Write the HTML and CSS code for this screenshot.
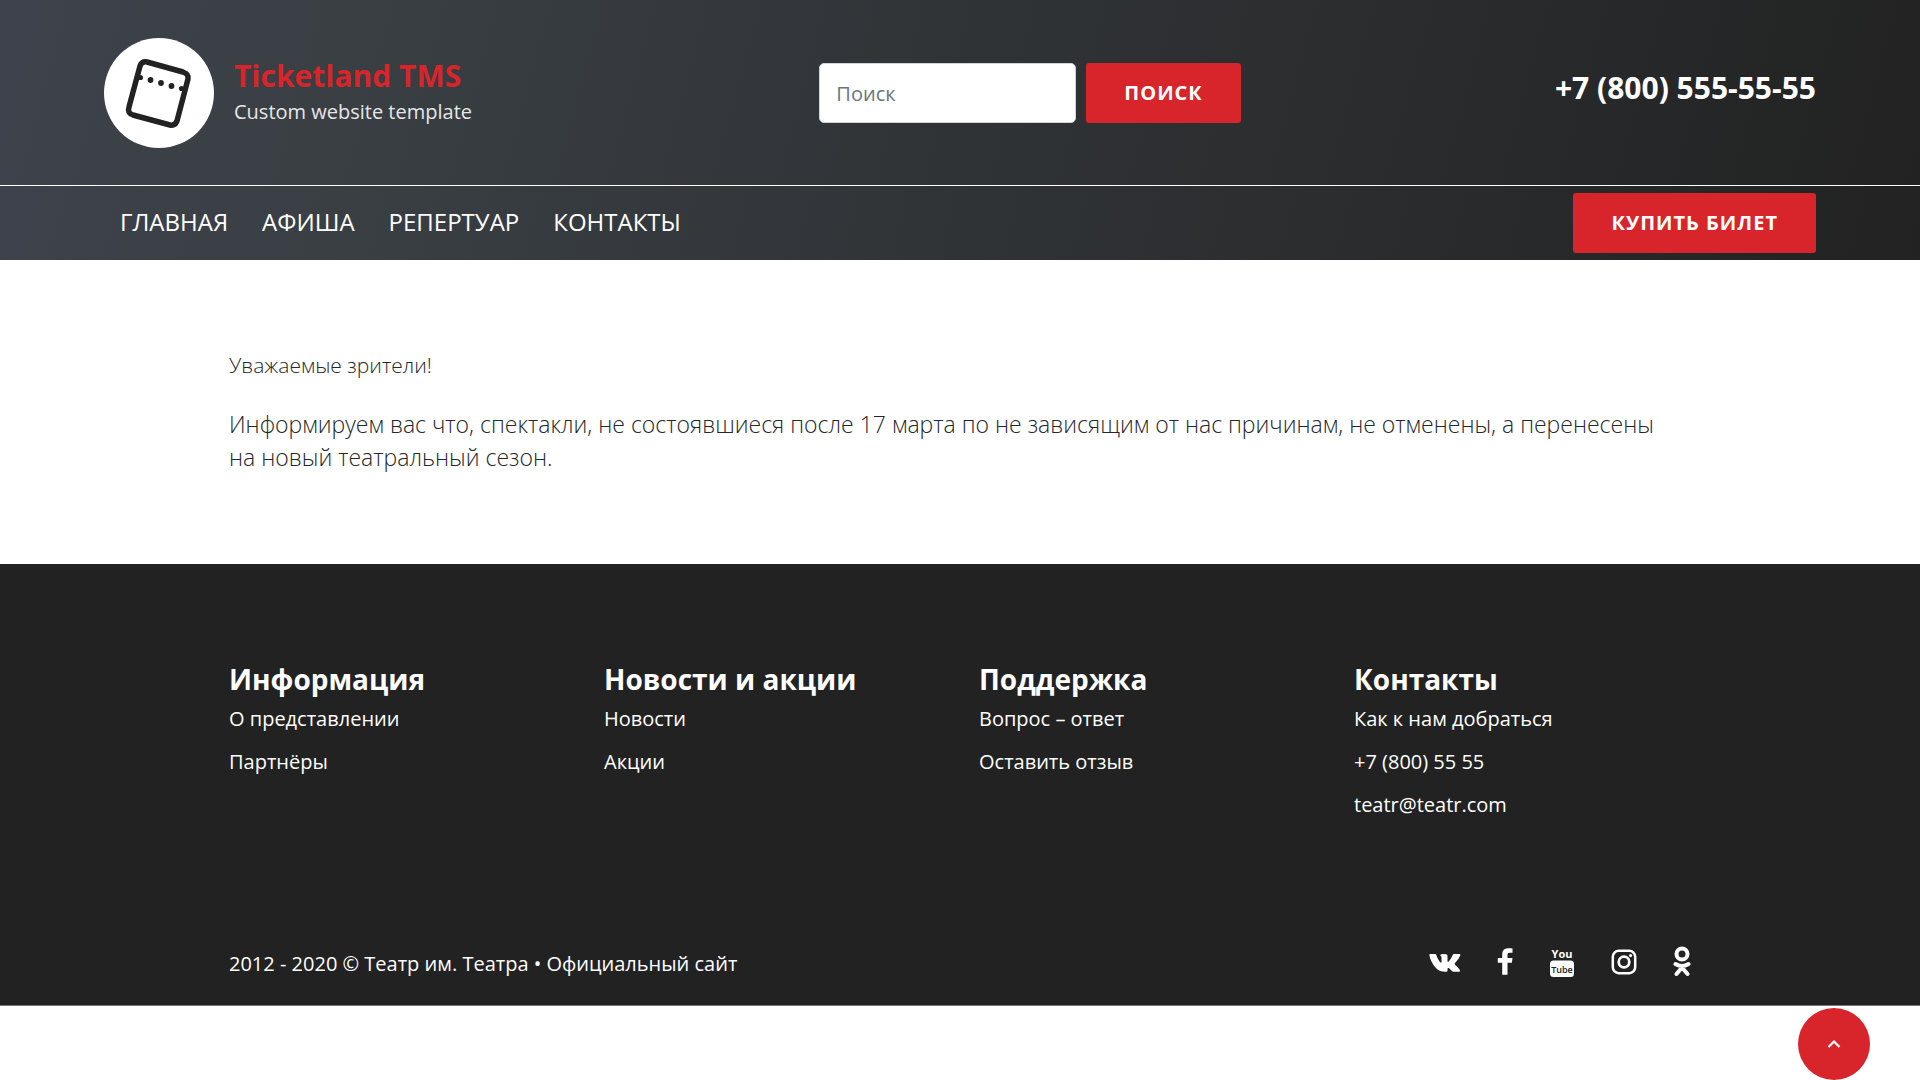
FILE: index.html
```html
<!DOCTYPE html>
<html lang="ru">
<head>
<meta charset="utf-8">
<meta name="viewport" content="width=device-width, initial-scale=1">
<title>Ticketland TMS</title>
<link rel="stylesheet" href="styles.css">
</head>
<body>
<header class="header">
  <div class="header-band">
    <div class="header-top">
      <a class="logo" href="#">
        <svg class="logo-mark" viewBox="0 0 110 110" aria-hidden="true">
          <circle cx="55" cy="55" r="55" fill="#fff"/>
          <path d="M43 24 L79 34 Q85 36 84 41 L73 83 Q71 88 66 87 L29 77 Q23 75 25 69 L36 28 Q38 23 43 24 Z" fill="none" stroke="#222" stroke-width="5.5"/>
          <g fill="#222"><circle cx="36.500" cy="39.500" r="2.600"/><circle cx="46.500" cy="42" r="2.900"/><circle cx="57" cy="45" r="2.900"/><circle cx="67.500" cy="48" r="2.900"/><circle cx="77.500" cy="50.500" r="2.600"/></g>
        </svg>
        <span class="logo-text">
          <span class="logo-name">Ticketland TMS</span>
          <span class="logo-tagline">Custom website template</span>
        </span>
      </a>
      <form class="search">
        <input class="search-input" type="search" placeholder="Поиск" aria-label="Поиск">
        <button class="button" type="button">Поиск</button>
      </form>
      <a class="phone" href="tel:+78005555555">+7 (800) 555-55-55</a>
    </div>
  </div>
  <div class="header-band header-bar">
    <div class="header-nav">
      <nav class="menu">
        <a href="#">Главная</a>
        <a href="#">Афиша</a>
        <a href="#">Репертуар</a>
        <a href="#">Контакты</a>
      </nav>
      <button class="button" type="button">Купить билет</button>
    </div>
  </div>
</header>
<main class="content">
  <p class="greeting">Уважаемые зрители!</p>
  <p class="notice">Информируем вас что, спектакли, не состоявшиеся после 17 марта по не зависящим от нас причинам, не отменены, а перенесены на новый театральный сезон.</p>
</main>
<footer class="footer">
  <div class="footer-inner">
    <div class="footer-columns">
      <section class="footer-column">
        <h2>Информация</h2>
        <a href="#">О представлении</a>
        <a href="#">Партнёры</a>
      </section>
      <section class="footer-column">
        <h2>Новости и акции</h2>
        <a href="#">Новости</a>
        <a href="#">Акции</a>
      </section>
      <section class="footer-column">
        <h2>Поддержка</h2>
        <a href="#">Вопрос – ответ</a>
        <a href="#">Оставить отзыв</a>
      </section>
      <section class="footer-column">
        <h2>Контакты</h2>
        <a href="#">Как к нам добраться</a>
        <a href="tel:+78005555">+7 (800) 55 55</a>
        <a href="mailto:teatr@teatr.com">teatr@teatr.com</a>
      </section>
    </div>
    <div class="footer-bottom">
      <p class="copyright">2012 - 2020 © Театр им. Театра • Официальный сайт</p>
      <div class="social">
        <a href="#" aria-label="VK"><svg width="32" height="32" viewBox="0 0 32 32"><path fill="currentColor" d="M1 8h5c1 0 1 .5 1.500 1.500 1 3 2.500 5.500 4 7 .7.600 1 .3 1-.7v-4c0-1.500-.5-2-1.500-2.500.6-1 2-1.300 4-1.300 3 0 3.500.7 3.500 2v5c0 1 .5 1.300 1.200.6 1.600-1.700 3-4.200 4-6.500.4-.8.700-1.100 1.500-1.100h5c1.200 0 1.400.6 1 1.500-.8 2.500-3 5-5 7.300-.8.900-.7 1.300.1 2.200 1.800 1.700 4 3.700 4.600 5.200.3 1-.2 1.600-1.300 1.600h-5c-1 0-1.500-.4-2.200-1.200-1-1.100-1.800-2.200-2.700-2.600-.8-.3-1.200.1-1.200 1v1.300c0 1-.5 1.500-1.500 1.500-6.500.3-10.500-3-13.500-8.500C2.200 15 1 12.500.500 9.500.300 8.500.500 8 1 8z"/></svg></a>
        <a href="#" aria-label="Facebook"><svg width="16" height="32" viewBox="0 0 16 32"><path fill="currentColor" d="M15.500 2.500v4.300h-2.800c-1.900 0-2.200.9-2.200 2.200V12h5l-.6 4.800h-4.400v12H5.200v-12H.800V12h4.400V8.300c0-4 2.400-6.100 6.200-6.100 1.800 0 3.400.1 4.100.3z"/></svg></a>
        <a href="#" aria-label="YouTube"><svg width="26" height="32" viewBox="0 0 26 32"><text class="youtube-you" x="13" y="12" text-anchor="middle">You</text><rect x="1" y="14.500" width="24" height="16.500" rx="3.500" fill="currentColor"/><text class="youtube-tube" x="13" y="26.500" text-anchor="middle">Tube</text></svg></a>
        <a href="#" aria-label="Instagram"><svg width="26" height="32" viewBox="0 0 26 32"><g fill="none" stroke="currentColor"><rect x="1.800" y="4.800" width="22.400" height="22.400" rx="6" stroke-width="2.500"/><circle cx="13" cy="16" r="5.300" stroke-width="2.700"/></g><circle cx="19.600" cy="9.600" r="1.600" fill="currentColor"/></svg></a>
        <a href="#" aria-label="Одноклассники"><svg width="18" height="32" viewBox="0 0 18 32"><g fill="none" stroke="currentColor" stroke-width="4"><circle cx="9" cy="8" r="5.500"/><path stroke-linecap="round" stroke-linejoin="round" d="M2.500 18Q9 22 15.500 18M9 21.500 3.500 28M9 21.500 14.500 28"/></g></svg></a>
      </div>
    </div>
  </div>
</footer>
<a class="to-top" href="#" aria-label="Наверх"><svg width="14" height="10" viewBox="0 0 14 10"><path d="M1.500 8 7 2.500 12.500 8" fill="none" stroke="#fff" stroke-width="2.200"/></svg></a>
</body>
</html>
```
FILE: styles.css
```css
* {
  box-sizing: border-box;
}

body {
  margin: 0;
  font-family: "Open Sans", "Noto Sans", sans-serif;
  font-size: 20px;
  line-height: 30px;
  color: #26272b;
  background: #fff;
}

a {
  color: inherit;
  text-decoration: none;
}

.header {
  color: #fff;
}

.header-band {
  background: linear-gradient(105deg, #3e424c 0%, #393f43 18%, #303336 50%, #222 100%);
}

.header-top,
.header-nav {
  max-width: 1712px;
  margin: 0 auto;
  align-items: center;
}

.header-top {
  display: grid;
  grid-template-columns: 5fr 4fr 3fr;
  gap: 12px;
  padding: 38px 0 37px;
}

.logo {
  display: flex;
  align-items: center;
  gap: 20px;
}

.logo-mark {
  width: 110px;
  height: 110px;
}

.logo-text {
  display: flex;
  flex-direction: column;
  gap: 4px;
  padding-bottom: 2px;
}

.logo-name {
  font-size: 30px;
  line-height: 36px;
  font-weight: 700;
  color: #d7252b;
}

.logo-tagline {
  line-height: 28px;
  color: #e6e7e8;
}

.search {
  display: flex;
  gap: 10px;
}

.search-input {
  width: 257px;
  height: 60px;
  padding: 0 16px;
  border: 1px solid #ced4da;
  border-radius: 5px;
  font: inherit;
  background: #fff;
}

.search-input::placeholder {
  color: #6c757d;
}

.button {
  height: 60px;
  padding: 0 38px;
  border: 0;
  border-radius: 3px;
  font: inherit;
  font-weight: 700;
  letter-spacing: 1px;
  text-transform: uppercase;
  color: #fff;
  background: #d7252b;
}

.phone {
  justify-self: end;
  padding-bottom: 10px;
  font-size: 30px;
  font-weight: 700;
}

.header-bar {
  border-top: 1px solid #fff;
}

.header-nav {
  display: flex;
  justify-content: space-between;
  padding: 7px 0;
}

.menu {
  display: flex;
  gap: 34px;
  padding: 0 0 2px 16px;
  font-size: 24px;
  text-transform: uppercase;
}

.content,
.footer-inner {
  max-width: 1462px;
  margin: 0 auto;
}

.content {
  padding: 90px 0;
  font-weight: 300;
}

.greeting {
  margin: 0 0 28px;
  font-size: 21px;
}

.notice {
  margin: 0;
  padding-right: 12px;
  font-size: 23px;
  line-height: 33px;
}

.footer {
  color: #fff;
  background: #222;
  border-bottom: 1px solid #777;
}

.footer-inner {
  padding: 97px 0 26px;
}

.footer-columns {
  display: grid;
  grid-template-columns: repeat(4, 1fr);
  gap: 38px;
}

.footer-column {
  display: flex;
  flex-direction: column;
  align-items: flex-start;
  gap: 13px;
}

.footer-column h2 {
  margin: 0 0 -6px;
  font-size: 28px;
  line-height: 36px;
}

.footer-bottom {
  display: flex;
  align-items: center;
  justify-content: space-between;
  padding-top: 125px;
}

.copyright {
  margin: 0;
  padding-top: 4px;
}

.social {
  display: flex;
  align-items: center;
  gap: 36px;
}

.social a,
.social svg {
  display: block;
}

.youtube-you {
  font: 700 11px "Open Sans", sans-serif;
  fill: currentColor;
}

.youtube-tube {
  font: 600 9px "Open Sans", sans-serif;
  fill: #222;
}

.to-top {
  position: fixed;
  right: 50px;
  bottom: 0;
  display: flex;
  align-items: center;
  justify-content: center;
  width: 72px;
  height: 72px;
  border-radius: 50%;
  background: #d7252b;
}
```
